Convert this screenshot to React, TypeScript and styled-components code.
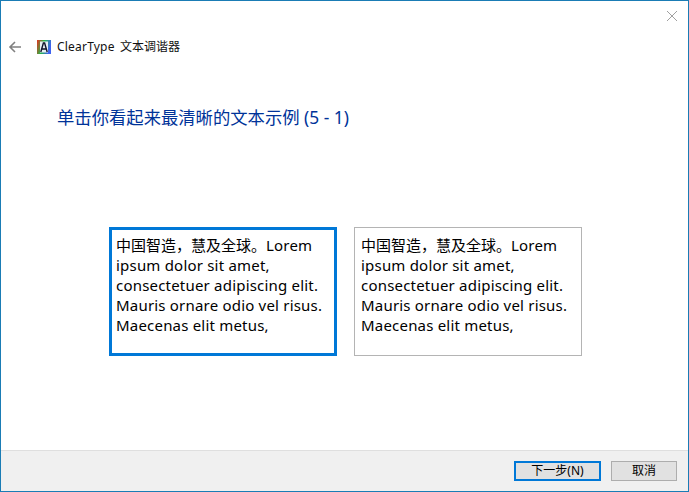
import React from "react";
import styled, { createGlobalStyle } from "styled-components";

const Global = createGlobalStyle`
  html, body { margin: 0; padding: 0; background: #fff; }
  * { box-sizing: border-box; }
`;
const CJK = `"Noto Sans", "Noto Sans CJK SC", sans-serif`;

const Window = styled.div`
  width: 689px; height: 492px; border: 1px solid #1a7cb5; background: #fff;
  display: flex; flex-direction: column; font-family: ${CJK}; color: #000; overflow: hidden;
`;
const TitleBar = styled.div`
  height: 28px; display: flex; justify-content: flex-end; align-items: flex-start; padding: 9px 10px 0 0;
`;
const CloseButton = styled.button`
  width: 12px; height: 12px; padding: 0; border: 0; background: none; display: block;
  svg { display: block; }
`;
const NavRow = styled.div`
  height: 36px; display: flex; align-items: center; padding-left: 7px;
`;
const BackButton = styled.button`
  width: 14px; height: 14px; padding: 0; border: 0; background: none; margin-right: 15px;
  svg { display: block; }
`;
const AppTitle = styled.span`
  font: 12px/16px ${CJK}; color: #111; margin-left: 6px; letter-spacing: 0.2px; word-spacing: 2px;
`;
const TitleCjk = styled.span`
  letter-spacing: 0;
`;
const Heading = styled.h1`
  margin: 40px 0 0 56px; font: 400 17.33px/24px ${CJK}; color: #003399; height: 24px;
`;
const Samples = styled.div`
  display: flex; gap: 17px; margin: 98px 0 0 108px;
`;
const Sample = styled.div<{ $selected?: boolean }>`
  width: 228px; height: 129px;
  border: ${(p) => (p.$selected ? "3px solid #0078d7" : "1px solid #b4b4b4")};
  padding: ${(p) => (p.$selected ? "5px 0 0 4px" : "7px 0 0 6px")};
  font: 15px/20px ${CJK}; letter-spacing: 0.2px; color: #000; background: #fff;
`;
const Line = styled.div`white-space: nowrap;`;
const SampleCjk = styled.span`
  letter-spacing: 0;
`;
const Spacer = styled.div`flex: 1;`;
const Footer = styled.div`
  height: 41px; background: #f0f0f0; border-top: 1px solid #dfdfdf;
  display: flex; justify-content: flex-end; gap: 10px; padding: 10px 11px 0 0;
`;
const DialogButton = styled.button<{ $primary?: boolean; $w: number }>`
  width: ${(p) => p.$w}px; height: 20px; padding: 0; background: #e1e1e1;
  border: ${(p) => (p.$primary ? "2px solid #0078d7" : "1px solid #adadad")};
  font: 12px/16px ${CJK}; color: #000;
`;

const SampleText = () => (
  <>
    <Line><SampleCjk>中国智造，慧及全球。</SampleCjk>Lorem</Line>
    <Line>ipsum dolor sit amet,</Line>
    <Line>consectetuer adipiscing elit.</Line>
    <Line>Mauris ornare odio vel risus.</Line>
    <Line>Maecenas elit metus,</Line>
  </>
);

const AppIcon = () => (
  <svg width="14" height="14" viewBox="0 0 14 14" style={{ flex: "none" }}>
    <defs>
      <linearGradient id="rgb" x1="0" x2="1" y1="0" y2="0.3">
        <stop offset="0" stopColor="#e8301f" />
        <stop offset="0.5" stopColor="#22b84a" />
        <stop offset="1" stopColor="#3f62f0" />
      </linearGradient>
    </defs>
    <rect x="0" y="0" width="14" height="14" fill="url(#rgb)" />
    <rect x="3" y="1.5" width="8" height="11" fill="#e6eef4" />
    <path d="M3.8 12 L6.4 3 H7.6 L10.2 12 M5 9 H9" stroke="#10142a" strokeWidth="1.4" fill="none" />
  </svg>
);

export default function App() {
  return (
    <Window>
      <Global />
      <TitleBar>
        <CloseButton aria-label="关闭">
          <svg width="12" height="12" viewBox="0 0 12 12"><path d="M1 1 L11 11 M11 1 L1 11" stroke="#a0a0a0" strokeWidth="1" fill="none" /></svg>
        </CloseButton>
      </TitleBar>
      <NavRow>
        <BackButton aria-label="返回">
          <svg width="14" height="14" viewBox="0 0 14 14"><path d="M13 7 H2 M7 2 L2 7 L7 12" stroke="#808080" strokeWidth="1.6" fill="none" /></svg>
        </BackButton>
        <AppIcon />
        <AppTitle>ClearType <TitleCjk>文本调谐器</TitleCjk></AppTitle>
      </NavRow>
      <Heading>单击你看起来最清晰的文本示例 (5 - 1)</Heading>
      <Samples>
        <Sample $selected><SampleText /></Sample>
        <Sample><SampleText /></Sample>
      </Samples>
      <Spacer />
      <Footer>
        <DialogButton $primary $w={87}>下一步(N)</DialogButton>
        <DialogButton $w={66}>取消</DialogButton>
      </Footer>
    </Window>
  );
}
